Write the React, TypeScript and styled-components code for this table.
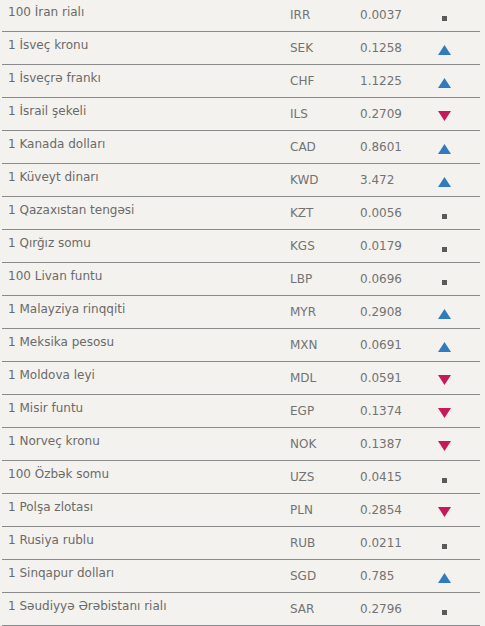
import React from "react";
import styled, { createGlobalStyle } from "styled-components";

const Global = createGlobalStyle`
  html, body { margin: 0; padding: 0; background: #f4f2ee; }
  body { font-family: "DejaVu Sans", Verdana, sans-serif; }
`;

type Trend = "up" | "down" | "flat";

const rows: [string, string, string, Trend][] = [
  ["100 İran rialı", "IRR", "0.0037", "flat"],
  ["1 İsveç kronu", "SEK", "0.1258", "up"],
  ["1 İsveçrə frankı", "CHF", "1.1225", "up"],
  ["1 İsrail şekeli", "ILS", "0.2709", "down"],
  ["1 Kanada dolları", "CAD", "0.8601", "up"],
  ["1 Küveyt dinarı", "KWD", "3.472", "up"],
  ["1 Qazaxıstan tengəsi", "KZT", "0.0056", "flat"],
  ["1 Qırğız somu", "KGS", "0.0179", "flat"],
  ["100 Livan funtu", "LBP", "0.0696", "flat"],
  ["1 Malayziya rinqqiti", "MYR", "0.2908", "up"],
  ["1 Meksika pesosu", "MXN", "0.0691", "up"],
  ["1 Moldova leyi", "MDL", "0.0591", "down"],
  ["1 Misir funtu", "EGP", "0.1374", "down"],
  ["1 Norveç kronu", "NOK", "0.1387", "down"],
  ["100 Özbək somu", "UZS", "0.0415", "flat"],
  ["1 Polşa zlotası", "PLN", "0.2854", "down"],
  ["1 Rusiya rublu", "RUB", "0.0211", "flat"],
  ["1 Sinqapur dolları", "SGD", "0.785", "up"],
  ["1 Səudiyyə Ərəbistanı rialı", "SAR", "0.2796", "flat"],
];

const Table = styled.div`
  width: 478px;
  margin: -1px 0 0 2px;
  display: flex;
  flex-direction: column;
`;

const Row = styled.div`
  display: grid;
  grid-template-columns: 288px 70px 70px 28px 1fr;
  height: 32px;
  border-bottom: 1px solid #8a8a8a;
  font-size: 12px;
  line-height: 15px;
`;

const Name = styled.div`
  padding: 6px 0 0 6px;
  color: #6a6a6a;
  white-space: nowrap;
`;

const Cell = styled.div`
  padding-top: 9px;
  color: #737373;
`;

const IconCell = styled.div<{ $trend: Trend }>`
  display: flex;
  justify-content: center;
  align-items: flex-start;
  padding-top: ${(p) => (p.$trend === "flat" ? "17px" : "13px")};
`;

const Square = styled.div`
  width: 5px;
  height: 5px;
  background: #5a5a5a;
`;

const TrendIcon: React.FC<{ trend: Trend }> = ({ trend }) => {
  if (trend === "flat") return <Square />;
  if (trend === "up")
    return (
      <svg width="13" height="10" viewBox="0 0 13 10">
        <polygon points="6.5,0 13,10 0,10" fill="#2f7bbd" />
      </svg>
    );
  return (
    <svg width="13" height="10" viewBox="0 0 13 10">
      <polygon points="0,0 13,0 6.5,10" fill="#c8185c" />
    </svg>
  );
};

export default function App() {
  return (
    <>
      <Global />
      <Table>
        {rows.map(([name, code, val, trend]) => (
          <Row key={code}>
            <Name>{name}</Name>
            <Cell>{code}</Cell>
            <Cell>{val}</Cell>
            <IconCell $trend={trend}>
              <TrendIcon trend={trend} />
            </IconCell>
            <div />
          </Row>
        ))}
      </Table>
    </>
  );
}
